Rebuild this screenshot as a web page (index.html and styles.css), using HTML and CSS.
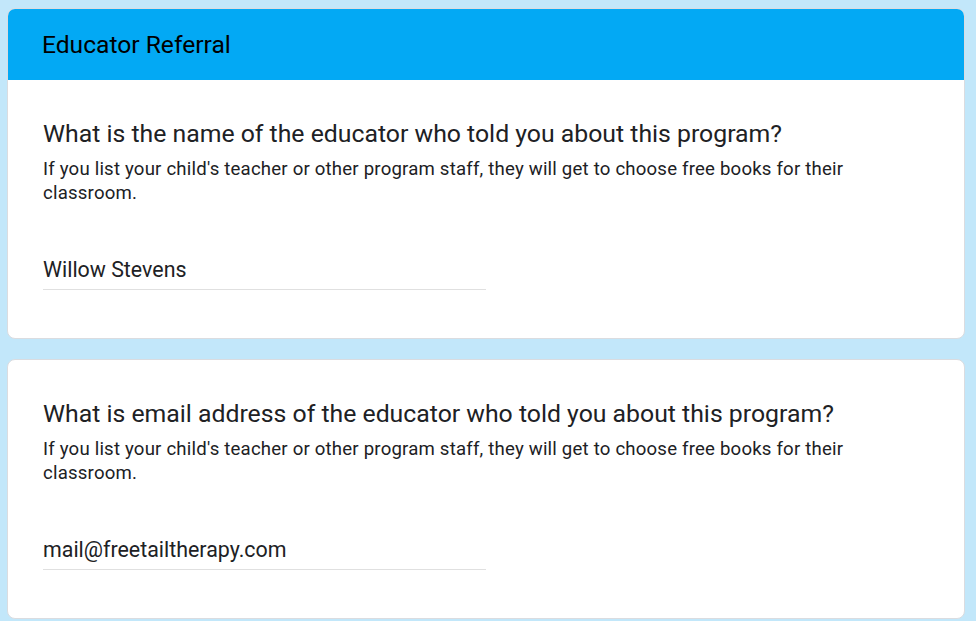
FILE: index.html
```html
<!DOCTYPE html>
<html lang="en">
<head>
  <meta charset="UTF-8" />
  <title>Educator Referral</title>
  <link rel="stylesheet" href="styles.css">
</head>
<body>
  <div class="form">
    <div class="card">
      <div class="card-header">Educator Referral</div>
      <div class="question">
        <h2>What is the name of the educator who told you about this program?</h2>
        <p>If you list your child's teacher or other program staff, they will get to choose free books for their classroom.</p>
        <input type="text" value="Willow Stevens" />
      </div>
    </div>
    <div class="card">
      <div class="question">
        <h2>What is email address of the educator who told you about this program?</h2>
        <p>If you list your child's teacher or other program staff, they will get to choose free books for their classroom.</p>
        <input type="text" value="mail@freetailtherapy.com" />
      </div>
    </div>
  </div>
</body>
</html>
```

FILE: styles.css
```css
* {
  box-sizing: border-box;
  margin: 0;
  padding: 0;
}

body {
  font-family: Roboto, Arial, sans-serif;
  background: #c2e7fa;
  color: #202124;
  padding: 8px 11px 0 7px;
}

.form {
  display: flex;
  flex-direction: column;
  gap: 20px;
}

.card {
  background: white;
  border: 1px solid #dadce0;
  border-radius: 8px;
  overflow: hidden;
}

.card-header {
  background: #03a9f4;
  height: 72px;
  margin: -1px -1px 0;
  display: flex;
  align-items: center;
  padding-left: 35px;
  font-size: 24.6px;
  color: #000;
}

.question {
  padding: 40px 36px 48px 35px;
}

.question h2 {
  font-weight: normal;
  font-size: 24.8px;
  line-height: 28px;
  margin-bottom: 9px;
}

.question p {
  font-size: 18.6px;
  line-height: 24px;
  letter-spacing: 0.2px;
  margin-bottom: 53px;
}

.question input {
  display: block;
  width: 443px;
  border: none;
  border-bottom: 1px solid #e0e0e0;
  font-family: inherit;
  font-size: 21.4px;
  line-height: 24px;
  padding: 0 0 7px;
  color: #202124;
  outline: none;
}
```
